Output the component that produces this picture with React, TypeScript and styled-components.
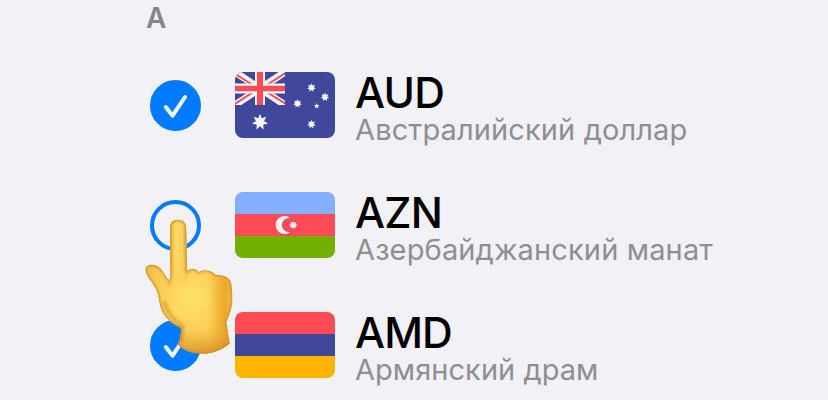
import React from 'react';
import styled, { createGlobalStyle } from 'styled-components';

const GlobalStyle = createGlobalStyle`
  body { margin: 0; background: #f2f1f6; overflow: hidden; }
`;

const Screen = styled.main`
  position: relative;
  width: 828px;
  height: 400px;
  overflow: hidden;
  background: #f2f1f6;
  font-family: Inter, 'Noto Sans', sans-serif;
`;

const SectionTitle = styled.h2`
  margin: 0;
  height: 45px;
  padding-left: 146px;
  box-sizing: border-box;
  font-size: 28px;
  line-height: 37px;
  font-weight: 600;
  color: #87878b;
`;

const List = styled.ul`
  list-style: none;
  margin: 0;
  padding: 0;
`;

const Row = styled.li`
  display: flex;
  align-items: center;
  height: 120px;
  padding-left: 150px;
`;

const Check = styled.span<{ $on: boolean }>`
  display: flex;
  flex: none;
  box-sizing: border-box;
  width: 51px;
  height: 51px;
  margin-top: 1px;
  border-radius: 50%;
  border: 4px solid #007bff;
  background: ${(p) => (p.$on ? '#007bff' : 'transparent')};
`;

const CheckIcon = styled.svg`
  width: 51px;
  height: 51px;
  margin: -4px;
  flex: none;
`;

const Flag = styled.svg`
  flex: none;
  width: 100px;
  height: 66px;
  margin-left: 34px;
  border-radius: 8px;
`;

const Labels = styled.div`
  display: flex;
  flex-direction: column;
  margin-left: 20px;
  padding-top: 8px;
  white-space: nowrap;
`;

const Code = styled.span<{ $spacing: number }>`
  font-size: 42.5px;
  line-height: 42px;
  font-weight: 500;
  color: #000;
  letter-spacing: ${(p) => p.$spacing}px;
`;

const Name = styled.span<{ $spacing: number }>`
  font-size: 29px;
  line-height: 32px;
  color: #8f8f93;
  letter-spacing: ${(p) => p.$spacing}px;
`;

const Pointer = styled.svg`
  position: absolute;
  left: 140px;
  top: 215px;
  width: 100px;
  height: 145px;
`;

const star = (cx: number, cy: number, r: number, n: number, inner = 0.5, turn = 0) =>
  Array.from({ length: n * 2 }, (_, i) => {
    const a = (Math.PI * i) / n - Math.PI / 2 + turn;
    const d = i % 2 ? r * inner : r;
    return `${(cx + d * Math.cos(a)).toFixed(2)},${(cy + d * Math.sin(a)).toFixed(2)}`;
  }).join(' ');

const Australia = () => (
  <Flag viewBox="0 0 100 66">
    <path fill="#41479b" d="M0 0h100v66H0z" />
    <svg width="50" height="33" viewBox="0 0 50 33">
      <path d="M0 0 50 33M50 0 0 33" stroke="#f5f5f5" strokeWidth="7" />
      <path d="M2 3 19 14M50 1.3 31 13.5M0 32 19 19.5M31 19.5 50 31.5" stroke="#ff4b55" strokeWidth="2" />
      <path d="M25 0v33M0 16.5h50" stroke="#f5f5f5" strokeWidth="10" />
      <path d="M25 0v33" stroke="#ff4b55" strokeWidth="6" />
      <path d="M0 16.5h50" stroke="#ff4b55" strokeWidth="5.4" />
    </svg>
    <g fill="#f5f5f5">
      <polygon points={star(25, 50, 8.3, 7, 0.5)} />
      <polygon points={star(76.5, 15.7, 4.4, 7, 0.55)} />
      <polygon points={star(90, 25, 4.4, 7, 0.55)} />
      <polygon points={star(62.5, 31.5, 4.4, 7, 0.55)} />
      <polygon points={star(76.5, 52.3, 4.4, 7, 0.55)} />
      <polygon points={star(81.7, 34, 3, 5, 0.45)} />
    </g>
  </Flag>
);

const Azerbaijan = () => (
  <Flag viewBox="0 0 100 66">
    <path fill="#82afff" d="M0 0h100v22H0z" />
    <path fill="#ff4b55" d="M0 22h100v22H0z" />
    <path fill="#73af00" d="M0 44h100v22H0z" />
    <path fill="#f5f5f5" d="M55.5 26.2A9 9 0 1 0 55.5 39.8A7 7 0 1 1 55.5 26.2Z" />
    <polygon fill="#f5f5f5" points={star(58.3, 33, 4.2, 8, 0.6)} />
  </Flag>
);

const Armenia = () => (
  <Flag viewBox="0 0 100 66">
    <path fill="#ff4b55" d="M0 0h100v22H0z" />
    <path fill="#41479b" d="M0 22h100v22H0z" />
    <path fill="#ffb400" d="M0 44h100v22H0z" />
  </Flag>
);

const HAND =
  'M30 12.5C30 7 33.5 4.8 38 4.8C43 4.8 46 8 46.2 12.5L47.2 56C51 53 56 53 58.5 57C64 54 71 54.5 76 60C82 59.5 88 61.5 90.5 66C92.5 72 92.3 79 92.3 86C92 94 89 101 86.4 107L89.7 128.5C82 135.5 72 138.8 61 138.8C52 138.8 42 135 38 129.5C40.2 124 41.2 118 40.8 113C33 110 26 104 23 98C19.5 92 19 84 17.5 78C15 70 9 65 6 58C4 52.5 7 49.7 12 49.7C20 50 22.5 55.5 25.5 60.5C26.5 62.5 28 64.8 29 64.5C30.3 64 30.3 61 30.2 59Z';

const Hand = () => (
  <Pointer viewBox="0 0 100 145">
    <defs>
      <radialGradient id="skin" gradientUnits="userSpaceOnUse" cx="52" cy="84" r="66">
        <stop offset="0" stopColor="#ffe268" />
        <stop offset=".3" stopColor="#fdd65e" />
        <stop offset=".6" stopColor="#f8c950" />
        <stop offset="1" stopColor="#eeb441" />
      </radialGradient>
      <linearGradient id="side" x1="0" x2="1">
        <stop offset=".72" stopColor="#e9a021" stopOpacity="0" />
        <stop offset=".92" stopColor="#e89f22" stopOpacity=".8" />
        <stop offset="1" stopColor="#eeb03b" stopOpacity=".5" />
      </linearGradient>
      <linearGradient id="wrist" x1="0" y1="0" x2="0" y2="1">
        <stop offset=".83" stopColor="#d99227" stopOpacity="0" />
        <stop offset="1" stopColor="#cf8822" stopOpacity=".65" />
      </linearGradient>
      <linearGradient id="finger" x1="0" x2="1">
        <stop offset="0" stopColor="#edb53f" />
        <stop offset=".3" stopColor="#fcd765" />
        <stop offset=".65" stopColor="#fbd35f" />
        <stop offset="1" stopColor="#edb643" />
      </linearGradient>
      <linearGradient id="fade" x1="0" y1="0" x2="0" y2="1">
        <stop offset=".65" stopColor="#fff" />
        <stop offset="1" stopColor="#000" />
      </linearGradient>
      <mask id="fingerMask" maskUnits="userSpaceOnUse" x="28" y="4" width="21" height="66">
        <path fill="url(#fade)" d="M28 4h21v66H28z" />
      </mask>
      <clipPath id="handShape"><path d={HAND} /></clipPath>
      <filter id="soft" x="-20%" y="-20%" width="140%" height="140%">
        <feGaussianBlur stdDeviation="1.2" />
      </filter>
    </defs>
    <g clipPath="url(#handShape)">
      <path d={HAND} fill="url(#skin)" />
      <path d={HAND} fill="url(#side)" />
      <path d={HAND} fill="url(#wrist)" />
      <path fill="url(#finger)" mask="url(#fingerMask)" d="M30 4.5h17.3v65H30z" />
      <g fill="none" filter="url(#soft)">
        <path d={HAND} stroke="#c98d2c" strokeWidth="2.4" />
        <path d="M24 86Q29 103 43 111Q43 120 41 128" stroke="#cf8d28" strokeWidth="4" opacity=".5" />
        <path d="M29.5 64V72" stroke="#d89a32" strokeWidth="2" opacity=".7" />
      </g>
    </g>
  </Pointer>
);

const currencies = [
  { code: 'AUD', name: 'Австралийский доллар', on: true, flag: <Australia />, codeSpacing: -0.8, nameSpacing: 0.12 },
  { code: 'AZN', name: 'Азербайджанский манат', on: false, flag: <Azerbaijan />, codeSpacing: -0.8, nameSpacing: 0.14 },
  { code: 'AMD', name: 'Армянский драм', on: true, flag: <Armenia />, codeSpacing: -1, nameSpacing: 0.04 },
];

export default function App() {
  return (
    <Screen>
      <GlobalStyle />
      <SectionTitle>A</SectionTitle>
      <List>
        {currencies.map((c) => (
          <Row key={c.code}>
            <Check $on={c.on}>
              {c.on && (
                <CheckIcon viewBox="0 0 51 51">
                  <path d="M15.8 27 22.6 35.7 35 17" fill="none" stroke="#f2f1f6" strokeWidth="4" strokeLinecap="round" strokeLinejoin="round" />
                </CheckIcon>
              )}
            </Check>
            {c.flag}
            <Labels>
              <Code $spacing={c.codeSpacing}>{c.code}</Code>
              <Name $spacing={c.nameSpacing}>{c.name}</Name>
            </Labels>
          </Row>
        ))}
      </List>
      <Hand />
    </Screen>
  );
}
